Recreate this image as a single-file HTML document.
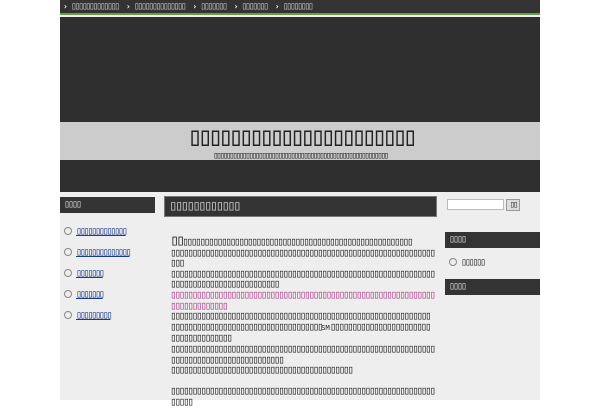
<!DOCTYPE html>
<html><head><meta charset="utf-8"><style>
*{margin:0;padding:0;box-sizing:border-box}
body{width:600px;height:400px;overflow:hidden;background:#fff;font-family:"DejaVu Sans Mono",monospace;color:#333}
#wrap{position:absolute;left:60px;top:0;width:480px;height:400px;background:#eee}
#nav{position:absolute;left:0;top:0;width:480px;height:15px;background:#333;border-bottom:2px solid #6a9a4a;font-size:10px;letter-spacing:-2.4px;color:#bbb;line-height:14px;padding-left:3px;white-space:nowrap}
#nav b{color:#fff;margin-right:3px;font-size:8px;letter-spacing:0}
#nav span{margin-right:8px}
#hd{position:absolute;left:0;top:17px;width:480px;height:175px;background:#2f2f2f}
#band{position:absolute;left:0;top:105px;width:480px;height:38px;background:#ccc;text-align:center;overflow:hidden}
#band .h{font-size:26px;letter-spacing:-5.4px;color:#222;line-height:30px}
#band .s{font-size:9px;letter-spacing:-2.2px;color:#222;line-height:8px;white-space:nowrap}
.bar{position:absolute;background:#333;color:#ddd;font-size:10px;letter-spacing:-2px;line-height:16px;padding-left:4px}
.lk{position:absolute;left:4px;font-size:10px;letter-spacing:-2.2px;color:#1a3a8a;text-decoration:underline;white-space:nowrap}
.lk:before{content:"";display:inline-block;width:6px;height:6px;border:1px solid #888;border-radius:50%;margin-right:4px;vertical-align:middle}
#main{position:absolute;left:110px;top:235px;width:270px;font-size:11px;letter-spacing:-2.3px;line-height:10.6px;word-break:break-all;color:#222}
</style></head><body>
<div id="wrap">
<div id="nav"><b>›</b><span>▯▯▯▯▯▯▯▯▯▯▯▯▯</span><b>›</b><span>▯▯▯▯▯▯▯▯▯▯▯▯▯▯</span><b>›</b><span>▯▯▯▯▯▯▯</span><b>›</b><span>▯▯▯▯▯▯▯</span><b>›</b><span>▯▯▯▯▯▯▯▯</span></div>
<div id="hd"><div id="band"><div class="h">▯▯▯▯▯▯▯▯▯▯▯▯▯▯▯▯▯▯▯▯▯▯</div><div class="s">▯▯▯▯▯▯▯▯▯▯▯▯▯▯▯▯▯▯▯▯▯▯▯▯▯▯▯▯▯▯▯▯▯▯▯▯▯▯▯▯▯▯▯▯▯▯▯▯▯▯▯▯▯▯</div></div></div>
<div class="bar" style="left:0;top:197px;width:95px">▯▯▯▯</div>
<div class="lk" style="top:226px">▯▯▯▯▯▯▯▯▯▯▯▯▯</div>
<div class="lk" style="top:247px">▯▯▯▯▯▯▯▯▯▯▯▯▯▯</div>
<div class="lk" style="top:268px">▯▯▯▯▯▯▯</div>
<div class="lk" style="top:289px">▯▯▯▯▯▯▯</div>
<div class="lk" style="top:310px">▯▯▯▯▯▯▯▯▯</div>
<div class="bar" style="left:104px;top:196px;width:273px;height:21px;border:1px solid #777;font-size:14px;letter-spacing:-2.6px;line-height:19px;color:#ccc">▯▯▯▯▯▯▯▯▯▯▯▯</div>
<div id="main">
<span style="font-size:15px;letter-spacing:-3px">▯▯</span>▯▯▯▯▯▯▯▯▯▯▯▯▯▯▯▯▯▯▯▯▯▯▯▯▯▯▯▯▯▯▯▯▯▯▯▯▯▯▯▯▯▯▯▯▯▯▯▯▯▯▯▯▯<br>
▯▯▯▯▯▯▯▯▯▯▯▯▯▯▯▯▯▯▯▯▯▯▯▯▯▯▯▯▯▯▯▯▯▯▯▯▯▯▯▯▯▯▯▯▯▯▯▯▯▯▯▯▯▯▯▯▯▯▯▯▯<br>▯▯▯<br>
▯▯▯▯▯▯▯▯▯▯▯▯▯▯▯▯▯▯▯▯▯▯▯▯▯▯▯▯▯▯▯▯▯▯▯▯▯▯▯▯▯▯▯▯▯▯▯▯▯▯▯▯▯▯▯▯▯▯▯▯▯<br>▯▯▯▯▯▯▯▯▯▯▯▯▯▯▯▯▯▯▯▯▯▯▯▯▯<br>
<span style="color:#b0408a">▯▯▯▯▯▯▯▯▯▯▯▯▯▯▯▯▯▯▯▯▯▯▯▯▯▯▯▯▯▯▯▯▯▯▯▯▯▯▯▯▯▯▯▯▯▯▯▯▯▯▯▯▯▯▯▯▯▯▯▯▯<br>▯▯▯▯▯▯▯▯▯▯▯▯▯</span><br>
▯▯▯▯▯▯▯▯▯▯▯▯▯▯▯▯▯▯▯▯▯▯▯▯▯▯▯▯▯▯▯▯▯▯▯▯▯▯▯▯▯▯▯▯▯▯▯▯▯▯▯▯▯▯▯▯▯▯▯▯<br>
▯▯▯▯▯▯▯▯▯▯▯▯▯▯▯▯▯▯▯▯▯▯▯▯▯▯▯▯▯▯▯▯▯▯▯<span style="letter-spacing:0;font-size:7px">SM</span>▯▯▯▯▯▯▯▯▯▯▯▯▯▯▯▯▯▯▯▯▯▯▯<br>▯▯▯▯▯▯▯▯▯▯▯▯▯▯<br>
▯▯▯▯▯▯▯▯▯▯▯▯▯▯▯▯▯▯▯▯▯▯▯▯▯▯▯▯▯▯▯▯▯▯▯▯▯▯▯▯▯▯▯▯▯▯▯▯▯▯▯▯▯▯▯▯▯▯▯▯▯<br>▯▯▯▯▯▯▯▯▯▯▯▯▯▯▯▯▯▯▯▯▯▯▯▯▯▯<br>
▯▯▯▯▯▯▯▯▯▯▯▯▯▯▯▯▯▯▯▯▯▯▯▯▯▯▯▯▯▯▯▯▯▯▯▯▯▯▯▯▯▯<br><br>
▯▯▯▯▯▯▯▯▯▯▯▯▯▯▯▯▯▯▯▯▯▯▯▯▯▯▯▯▯▯▯▯▯▯▯▯▯▯▯▯▯▯▯▯▯▯▯▯▯▯▯▯▯▯▯▯▯▯▯▯▯<br>▯▯▯▯▯
</div>
<div style="position:absolute;left:387px;top:199px;width:57px;height:11px;background:#fff;border:1px solid #bbb"></div>
<div style="position:absolute;left:446px;top:199px;width:14px;height:12px;background:#ddd;border:1px solid #999;font-size:9px;letter-spacing:-2px;line-height:10px;text-align:center">▯▯</div>
<div class="bar" style="left:385px;top:232px;width:95px">▯▯▯▯</div>
<div class="lk" style="left:389px;top:257px;color:#333;text-decoration:none">▯▯▯▯▯▯</div>
<div class="bar" style="left:385px;top:279px;width:95px">▯▯▯▯</div>
</div>
</body></html>
